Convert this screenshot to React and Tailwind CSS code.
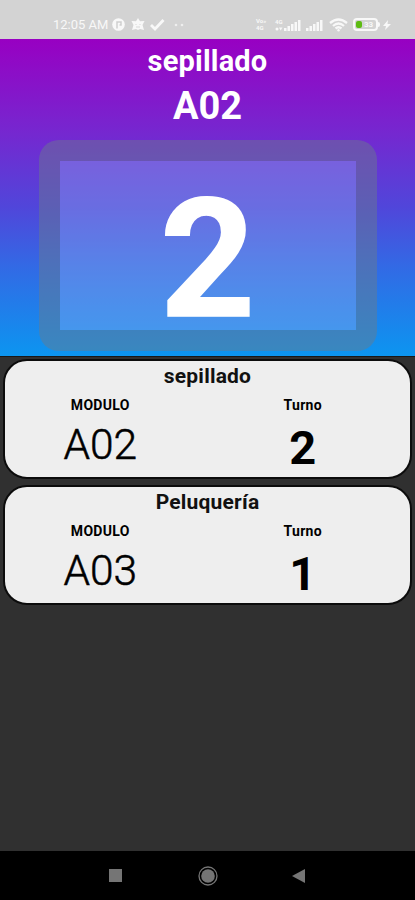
const turnos = [
  { servicio: 'sepillado', modulo: 'A02', turno: '2' },
  { servicio: 'Peluquería', modulo: 'A03', turno: '1' },
];

function Signal() {
  return (
    <svg width="17" height="12" viewBox="0 0 17 12" fill="currentColor">
      <path d="M0 9h2.500v3H0zM3.500 7H6v5H3.500zM7 5h2.500v7H7zM10.500 3H13v9h-2.500zM14 1h2.500v11H14z" />
    </svg>
  );
}

function StatusBar() {
  return (
    <div className="flex h-[39px] items-center justify-between bg-[#d3d3d3] pt-[10px] pr-[24px] pl-[53px] text-[#f8f8f8]">
      <div className="flex items-center">
        <span className="w-[56px] text-[13px] leading-none whitespace-nowrap">12:05 AM</span>
        <svg className="ml-[3px]" width="13" height="13" viewBox="0 0 13 13" fill="none">
          <circle cx="6.500" cy="6.500" r="6.300" fill="currentColor" />
          <path d="M5 10.500V4h4v3H7.500" stroke="#cfcfcf" strokeWidth="1.500" />
        </svg>
        <svg className="ml-[6px]" width="14" height="13" viewBox="0 0 14 13">
          <path d="M7 0l2 3.200 4.500-.2-2 4 1.500 5-4-1-2 1-2-1-4 1 1.500-5-2-4L5 3.200z" fill="currentColor" />
          <path d="M4.500 6.500h1M8.500 6.500h1M5 9h4" stroke="#d8d8d8" />
        </svg>
        <svg className="ml-[5px]" width="15" height="12" viewBox="0 0 15 12" fill="none" stroke="currentColor" strokeWidth="2.800">
          <path d="M1 6l4 4 8.500-9" />
        </svg>
        <svg className="ml-[9px]" width="10" height="4" viewBox="0 0 10 4" fill="currentColor" opacity=".75">
          <circle cx="2" cy="2" r="1.300" />
          <circle cx="8" cy="2" r="1.300" />
        </svg>
      </div>
      <div className="flex items-center">
        <div className="mr-[5px] flex w-[14px] flex-col gap-px text-[6px] leading-[6px] font-bold">
          <span>Vo»</span>
          <span>4G</span>
        </div>
        <div className="flex w-[26px] items-end">
          <div className="flex w-[9px] flex-col gap-[2px]">
            <span className="text-[6px] leading-[6px] font-bold">4G</span>
            <svg width="8" height="4" viewBox="0 0 8 4" fill="currentColor">
              <circle cx="2" cy="2" r="1.500" />
              <path d="M4 .5h3.500L5.700 3.500z" />
            </svg>
          </div>
          <Signal />
        </div>
        <div className="ml-[5px]">
          <Signal />
        </div>
        <svg className="ml-[6px]" width="19" height="14" viewBox="0 0 19 14" fill="none" stroke="currentColor" strokeWidth="2.300">
          <path d="M1 5Q9.500-2 18 5M4 8Q9.500 3 15 8M6.500 10.500Q9.500 8 12.500 10.500" />
          <circle cx="9.500" cy="12.300" r="1.200" fill="currentColor" stroke="none" />
        </svg>
        <div className="ml-[5px] flex h-[13px] w-[25px] items-center rounded-[4px] border-2 border-[#f8f8f8] pl-px">
          <div className="h-[7px] w-[6px] rounded-[2px] bg-[#5dbb12]" />
          <span className="ml-[2px] text-[8px] leading-none font-bold">33</span>
        </div>
        <div className="h-[5px] w-[2px] rounded-r bg-[#f8f8f8]" />
        <svg className="ml-[3px]" width="8" height="10" viewBox="0 0 8 10" fill="currentColor">
          <path d="M5 0L0 6h3l-1 4 6-6H4.500z" />
        </svg>
      </div>
    </div>
  );
}

function TurnoCard({ servicio, modulo, turno }) {
  return (
    <div className="h-[120px] rounded-[24px] border-2 border-[#0c0c0c] bg-[#eeeeee] text-center text-black">
      <div className="pt-[2px] text-[21px] leading-[26px] font-bold tracking-[0.2px] text-[#111]">{servicio}</div>
      <div className="grid grid-cols-2">
        <div className="pr-[12px]">
          <div className="pt-[6px] text-[14px] leading-[20px] font-bold tracking-[0.3px]">MODULO</div>
          <div className="pt-[5px] text-[42.5px] leading-[50px] font-light [-webkit-text-stroke:0.5px_black]">{modulo}</div>
        </div>
        <div className="pr-[12px]">
          <div className="pt-[6px] text-[14px] leading-[20px] font-bold tracking-[0.3px]">Turno</div>
          <div className="pt-[8px] text-[47px] leading-[50px] font-bold">{turno}</div>
        </div>
      </div>
    </div>
  );
}

export default function App() {
  const actual = turnos[0];

  return (
    <div className="flex h-[900px] w-[415px] flex-col overflow-hidden bg-[#303030] font-['Roboto',sans-serif]">
      <StatusBar />
      <header className="flex h-[317px] flex-col items-center bg-[linear-gradient(180deg,#9800c2_0%,#7528d0_30%,#5046da_53%,#326ae5_72%,#0c95f0_100%)] text-white">
        <h1 className="pt-[5px] text-[29px] leading-[34px] font-bold tracking-[0.2px]">{actual.servicio}</h1>
        <div className="mt-[4px] text-[38px] leading-[48px] font-bold">{actual.modulo}</div>
        {/* translucent frame, the fill stays inside the border */}
        <div className="mt-[10px] flex h-[211px] w-[338px] items-center justify-center rounded-[20px] border-[21px] border-[#6a7b8a]/47 bg-[#95b0ee]/37 bg-clip-padding">
          <span className="pt-[29px] text-[166px] leading-none font-bold [-webkit-text-stroke:1.500px_white]">{actual.turno}</span>
        </div>
      </header>
      <main className="flex flex-1 flex-col gap-[6px] border-t border-[#181818] px-[3px] pt-[2px]">
        {turnos.map((t) => (
          <TurnoCard key={t.modulo} {...t} />
        ))}
      </main>
      <nav className="flex h-[49px] items-center bg-black pl-[109px] text-[#757575]">
        <div className="h-[13px] w-[13px] bg-[#757575]" />
        <svg className="ml-[76px]" width="20" height="20" viewBox="0 0 20 20" fill="none" stroke="currentColor">
          <circle cx="10" cy="10" r="9" strokeWidth="1.300" />
          <circle cx="10" cy="10" r="6.800" fill="currentColor" stroke="none" />
        </svg>
        <svg className="ml-[74px]" width="13" height="14" viewBox="0 0 13 14" fill="currentColor">
          <path d="M13 0v14L0 7z" />
        </svg>
      </nav>
    </div>
  );
}
